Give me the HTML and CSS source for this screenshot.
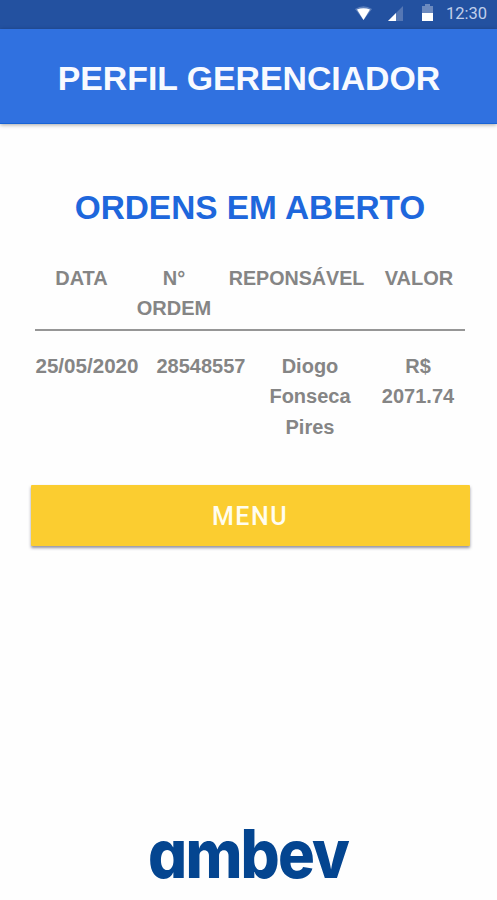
FILE: index.html
```html
<!DOCTYPE html>
<html lang="pt-br">

<head>
    <meta charset="UTF-8">
    <meta name="viewport" content="width=device-width, initial-scale=1.0">
    <title>Perfil Gerenciador</title>
    <link rel="stylesheet" href="styles.css">
</head>

<body>
    <div class="status-bar">
        <svg class="status-icons" width="82" height="28" viewBox="0 0 82 28">
            <path d="M0 9Q8.5 3.5 17 9L8.5 20Z" fill="#5c7fbb" />
            <path d="M2 9.5Q8.5 7 15 9.5L8.5 20Z" fill="#fff" />
            <path d="M33 21L48 6V21Z" fill="#5577b4" />
            <path d="M33 21L41 13V21Z" fill="#fff" />
            <path d="M67 6H70V4H75V6H78V13H67Z" fill="#6c8abf" />
            <path d="M67 13H78V21H67Z" fill="#fff" />
        </svg>
        <span class="clock">12:30</span>
    </div>

    <header>
        <h1>PERFIL GERENCIADOR</h1>
    </header>

    <main>
        <h2>ORDENS EM ABERTO</h2>

        <div class="row row-head">
            <span>DATA</span>
            <span>N°<br>ORDEM</span>
            <span class="responsavel">REPONSÁVEL</span>
            <span>VALOR</span>
        </div>
        <div class="row row-item">
            <span class="data">25/05/2020</span>
            <span>28548557</span>
            <span>Diogo<br>Fonseca<br>Pires</span>
            <span>R$<br>2071.74</span>
        </div>

        <button class="btn">MENU</button>
    </main>

    <footer>
        <svg class="logo" width="212" height="92" viewBox="0 0 212 92">
            <text x="2" y="70" textLength="200" lengthAdjust="spacingAndGlyphs">ambev</text>
        </svg>
    </footer>
</body>

</html>
```

FILE: styles.css
```css
* {
    box-sizing: border-box;
}

body {
    margin: 0;
    height: 900px;
    display: flex;
    flex-direction: column;
    background-color: #fefefe;
    font-family: "Liberation Sans", Arial, sans-serif;
}

.status-bar {
    height: 29px;
    display: flex;
    justify-content: flex-end;
    padding-right: 10px;
    background-color: #2351a0;
}

.status-icons {
    margin-right: 9px;
}

.clock {
    width: 41px;
    font: 16.5px/28px Roboto, sans-serif;
    color: #c0cfeb;
    white-space: nowrap;
}

header {
    height: 95px;
    background-color: #3071e0;
    border-bottom: 1px solid #1763d6;
    box-shadow: 0 1px 4px rgba(0, 0, 0, 0.35);
}

h1 {
    margin: 0;
    padding: 29px 0 0 1px;
    font-size: 33.8px;
    line-height: 40px;
    text-align: center;
    white-space: nowrap;
    color: #f8faff;
}

main {
    padding: 64px 27px 0 30px;
}

h2 {
    margin: 0;
    font-size: 33.4px;
    line-height: 40px;
    text-align: center;
    white-space: nowrap;
    color: #1e67dc;
}

.row {
    display: grid;
    width: 430px;
    margin-left: 5px;
    font-size: 20px;
    font-weight: bold;
    line-height: 30.4px;
    text-align: center;
    white-space: nowrap;
    color: #858585;
}

.row-head {
    grid-template-columns: 93px 92px 153px 92px;
    margin-top: 35px;
    height: 68px;
    border-bottom: 2px solid #969696;
}

.responsavel {
    font-size: 19.7px;
}

.row-item {
    grid-template-columns: 104px 124px 94px 122px;
    margin-top: 20px;
}

.data {
    font-size: 20.6px;
}

.btn {
    display: block;
    width: 439px;
    height: 61px;
    margin: 43px 0 0 0.5px;
    padding: 2px 0 0;
    border: none;
    border-radius: 1px;
    background-color: #fbcd30;
    box-shadow: 0 2px 3px rgba(40, 40, 70, 0.5);
    font: 500 25px Roboto, sans-serif;
    letter-spacing: 1.5px;
    color: #fffdf0;
}

footer {
    margin-top: auto;
    height: 92px;
    padding-left: 146px;
}

.logo {
    display: block;
    overflow: visible;
}

.logo text {
    font-family: Inter, sans-serif;
    font-size: 67px;
    font-weight: 800;
    font-feature-settings: "cv11";
    letter-spacing: -2px;
    fill: #044590;
}
```
